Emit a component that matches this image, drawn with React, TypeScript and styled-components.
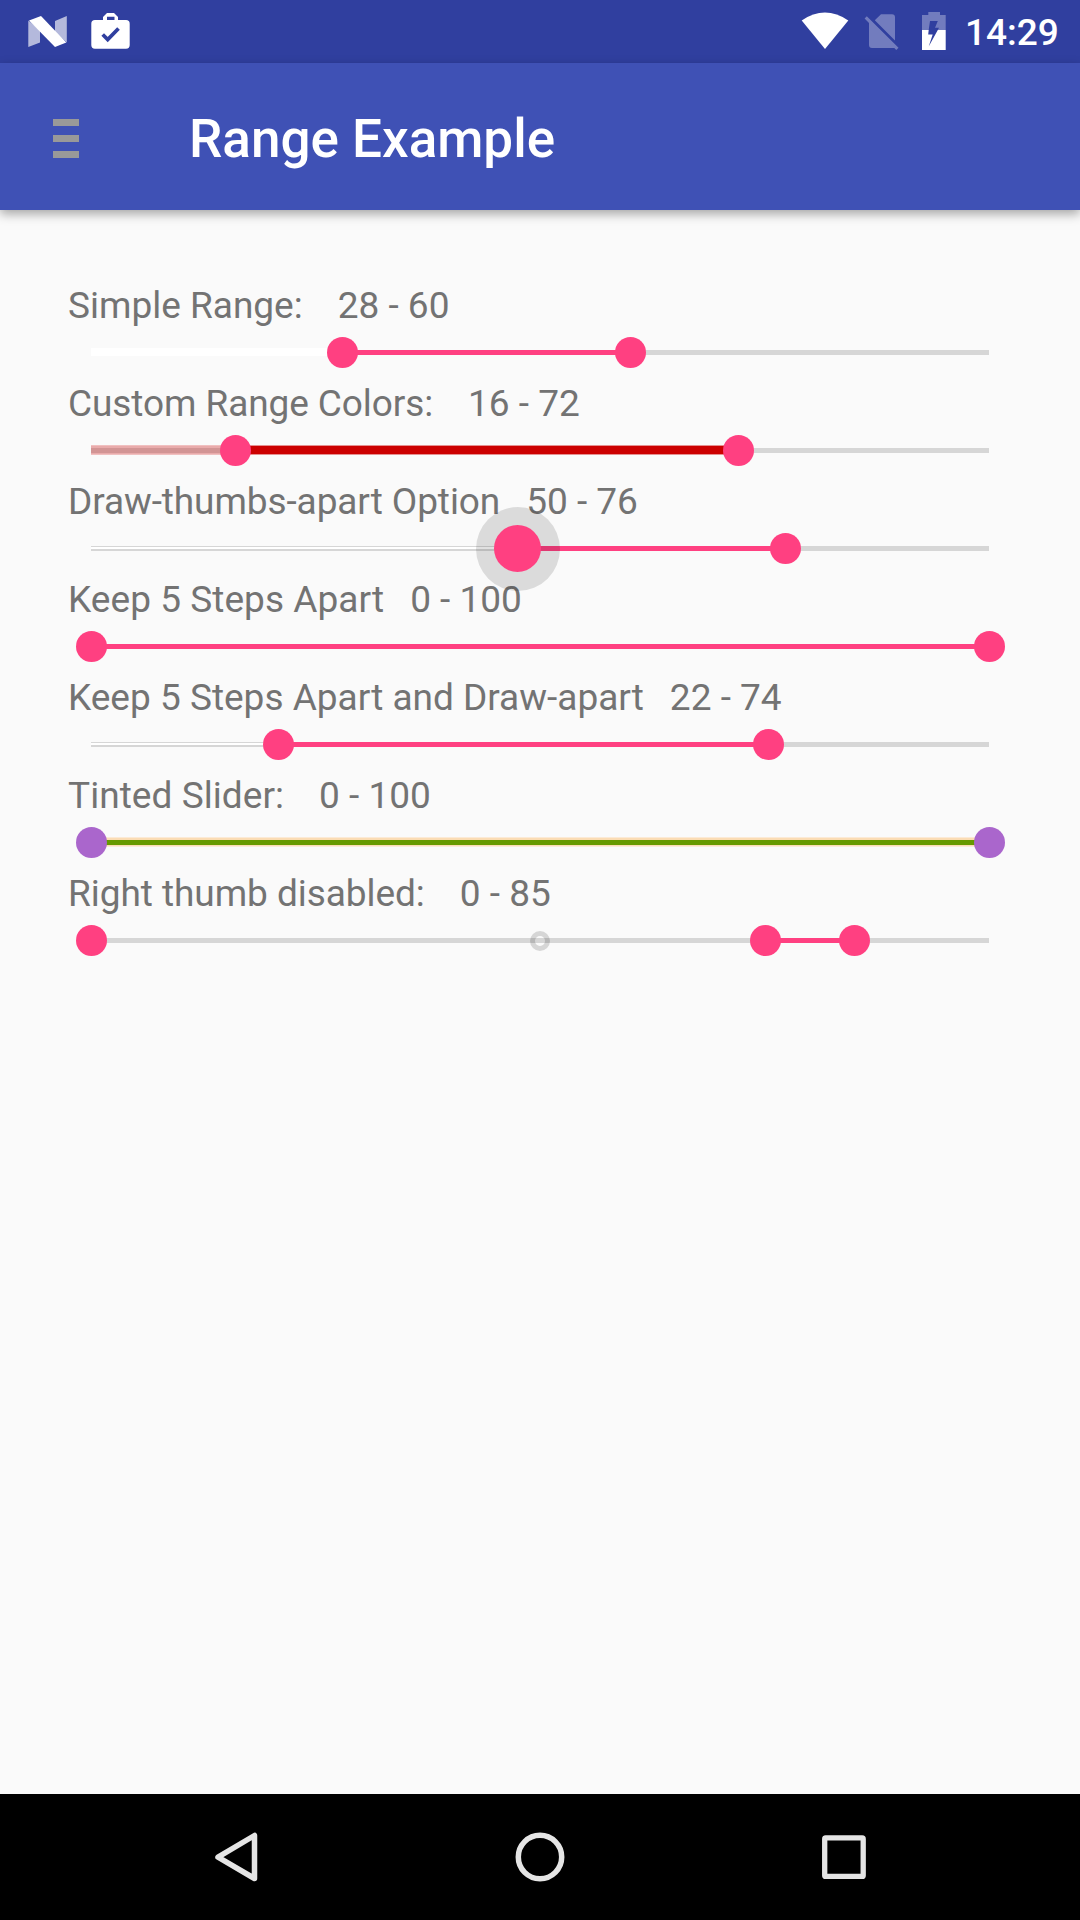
import React from "react";
import styled, { createGlobalStyle } from "styled-components";

const GlobalStyle = createGlobalStyle`
  html, body { margin: 0; padding: 0; background: #fafafa; }
  * { box-sizing: border-box; }
`;

const Screen = styled.div`
  width: 1080px;
  height: 1920px;
  display: flex;
  flex-direction: column;
  overflow: hidden;
  background: #fafafa;
  font-family: Roboto, sans-serif;
`;

const StatusBar = styled.header`
  height: 63px;
  flex: none;
  display: flex;
  align-items: center;
  justify-content: space-between;
  background: #303f9f;
  color: #fff;
`;

const StatusGroup = styled.div`
  display: flex;
  align-items: center;
  height: 63px;
`;

const StatusIcon = styled.svg<{ $gap?: number }>`
  display: block;
  flex: none;
  margin-left: ${(p) => p.$gap ?? 0}px;
`;

const Clock = styled.time`
  width: 92px;
  margin: 2px 23px 0 18px;
  font-size: 37px;
  line-height: 43px;
  font-weight: 500;
  white-space: nowrap;
`;

const AppBar = styled.div`
  height: 147px;
  flex: none;
  display: flex;
  align-items: center;
  padding-left: 53px;
  background: #3f51b5;
  box-shadow: 0 4px 10px rgba(0, 0, 0, 0.34);
`;

const MenuButton = styled.button`
  display: flex;
  flex-direction: column;
  gap: 9px;
  width: 27px;
  padding: 4px 0 0;
  border: 0;
  background: none;
`;

const MenuLine = styled.span`
  height: 7px;
  width: 26px;
  background: #999;
`;

const Title = styled.h1`
  margin: 4px 0 0 109px;
  color: #fff;
  font-size: 53px;
  line-height: 62px;
  font-weight: 500;
  white-space: nowrap;
`;

const Content = styled.main`
  flex: 1;
  display: flex;
  flex-direction: column;
  padding: 70px 91px 0 68px;
`;

const Row = styled.section`
  height: 98px;
  flex: none;
  display: flex;
  flex-direction: column;
`;

const Caption = styled.div`
  height: 49px;
  display: flex;
  align-items: center;
  padding-top: 2px;
  font-size: 37px;
  line-height: 47px;
  color: #737373;
  white-space: pre;
`;

const Label = styled.span<{ $tracking: number }>`
  letter-spacing: ${(p) => p.$tracking}px;
`;

const Value = styled.span<{ $gap: number }>`
  margin-left: ${(p) => p.$gap}px;
`;

const Slider = styled.div`
  position: relative;
  height: 47px;
  margin-left: 23px;
  width: 898px;
`;

const Bar = styled.div<{ $top: number; $h: number; $from: number; $to: number; $color: string }>`
  position: absolute;
  top: ${(p) => p.$top}px;
  height: ${(p) => p.$h}px;
  left: ${(p) => p.$from}px;
  width: ${(p) => p.$to - p.$from}px;
  background: ${(p) => p.$color};
`;

const Thumb = styled.span<{ $x: number; $size: number; $color: string }>`
  position: absolute;
  top: ${(p) => 23.5 - p.$size / 2}px;
  left: ${(p) => p.$x - p.$size / 2}px;
  width: ${(p) => p.$size}px;
  height: ${(p) => p.$size}px;
  border-radius: 50%;
  background: ${(p) => p.$color};
`;

const Ring = styled(Thumb)`
  background: none;
  border: 5px solid rgba(0, 0, 0, 0.14);
`;

const NavBar = styled.nav`
  height: 126px;
  flex: none;
  display: flex;
  justify-content: center;
  gap: 178px;
  background: #000;
`;

const NavButton = styled.button`
  width: 126px;
  height: 126px;
  padding: 0;
  border: 0;
  background: none;
`;

type Segment = { top: number; h: number; from: number; to: number; color: string };
type RangeRow = {
  label: string;
  value: string;
  gap: number;
  tracking?: number;
  bars: Segment[];
  thumbs: number[];
  thumbColor?: string;
  pressed?: boolean;
  marker?: number;
};

const PINK = "#ff4081";
const TRACK = "#d6d6d6";

const seg = (from: number, to: number, color: string, top = 21, h = 5): Segment => ({ top, h, from, to, color });

const rows: RangeRow[] = [
  {
    label: "Simple Range:",
    value: "28 - 60",
    gap: 35,
    bars: [seg(0, 251, "#fff", 19, 8), seg(251, 539, PINK), seg(539, 898, TRACK)],
    thumbs: [251.5, 539.5],
  },
  {
    label: "Custom Range Colors:",
    value: "16 - 72",
    gap: 35,
    tracking: -0.09,
    bars: [
      seg(0, 144, "#f0c0c0", 18, 10),
      seg(0, 144, "#e9abab", 19, 8),
      seg(0, 144, "#d29494"),
      seg(144, 647, "#e59090", 18, 10),
      seg(144, 647, "#cc0000", 19, 8),
      seg(647, 898, TRACK),
    ],
    thumbs: [144.5, 647.5],
  },
  {
    label: "Draw-thumbs-apart Option",
    value: "50 - 76",
    gap: 26,
    tracking: -0.09,
    bars: [seg(0, 426, TRACK), seg(0, 426, "#fff", 22, 2), seg(426, 694, PINK), seg(694, 898, TRACK)],
    thumbs: [426.5, 694.5],
    pressed: true,
  },
  { label: "Keep 5 Steps Apart", value: "0 - 100", gap: 26, tracking: 0.05, bars: [seg(0, 898, PINK)], thumbs: [0.5, 898.5] },
  {
    label: "Keep 5 Steps Apart and Draw-apart",
    value: "22 - 74",
    gap: 26,
    bars: [seg(0, 187, TRACK), seg(0, 187, "#fff", 22, 2), seg(187, 677, PINK), seg(677, 898, TRACK)],
    thumbs: [187.5, 677.5],
  },
  {
    label: "Tinted Slider:",
    value: "0 - 100",
    gap: 35,
    tracking: 0.06,
    bars: [seg(0, 898, "#fbead6", 18, 10), seg(0, 898, "#fbdcb4", 19, 8), seg(0, 898, "#669900")],
    thumbs: [0.5, 898.5],
    thumbColor: "#aa66cc",
  },
  {
    label: "Right thumb disabled:",
    value: "0 - 85",
    gap: 35,
    tracking: -0.05,
    bars: [seg(0, 674, TRACK), seg(674, 763, PINK), seg(763, 898, TRACK)],
    thumbs: [0.5, 674.5, 763.5],
    marker: 449.3,
  },
];

function RangeItem({ row }: { row: RangeRow }) {
  return (
    <Row>
      <Caption>
        <Label $tracking={row.tracking ?? 0}>{row.label}</Label>
        <Value $gap={row.gap}>{row.value}</Value>
      </Caption>
      <Slider>
        {row.bars.map((b, i) => (
          <Bar key={i} $top={b.top} $h={b.h} $from={b.from} $to={b.to} $color={b.color} />
        ))}
        {row.pressed && <Thumb $x={row.thumbs[0]} $size={84} $color="rgba(0,0,0,0.12)" />}
        {row.marker !== undefined && <Ring $x={row.marker} $size={20} $color="none" />}
        {row.thumbs.map((x, i) => (
          <Thumb key={x} $x={x} $size={row.pressed && i === 0 ? 47 : 31.5} $color={row.thumbColor ?? PINK} />
        ))}
      </Slider>
    </Row>
  );
}

export default function App() {
  return (
    <Screen>
      <GlobalStyle />
      <StatusBar>
        <StatusGroup>
          <StatusIcon $gap={28} width="39" height="63" viewBox="28 0 39 63" fill="#fff">
            <path fillOpacity=".64" d="M28.3 20.5 40 30V42.5L28.3 47ZM55 21l11.8-5v26.5L55 32Z" />
            <path d="M29 20.5 41 16 66.3 42.5 55 47Z" />
          </StatusIcon>
          <StatusIcon $gap={24} width="39" height="63" viewBox="91 0 39 63">
            <path
              fill="#fff"
              fillRule="evenodd"
              d="M95 20h8v-3l4-4h7l4 4v3h8q3.700 0 3.700 3.700V45q0 3.700-3.700 3.700H95q-3.700 0-3.700-3.700V23.700Q91.300 20 95 20ZM107 16.700V20h7.500v-3.300Z"
            />
            <path d="m102.700 34.500 5 5L118.500 28.500" fill="none" stroke="#303f9f" strokeWidth="3.700" />
          </StatusIcon>
        </StatusGroup>
        <StatusGroup>
          <StatusIcon width="48" height="63" viewBox="801 0 48 63" fill="#fff">
            <path d="M801.700 20.500Q824.900 4.700 848.300 20.500L825 49Z" />
          </StatusIcon>
          <StatusIcon $gap={14} width="37" height="63" viewBox="863 0 37 63">
            <path
              fill="#fff"
              fillOpacity=".32"
              d="M881 14.300H892q3 0 3 3V40.500L874.800 20.300ZM866.800 16.300 898.500 47.700 896.300 50 894.300 48.100H872q-3 0-3-3V22.900L864.600 18.500Z"
            />
          </StatusIcon>
          <StatusIcon $gap={21} width="26" height="63" viewBox="921 0 26 63">
            <path
              fill="#fff"
              fillOpacity=".32"
              d="M922 15h6.300v-3h11.700v3h5.700v15H937.800L939 27.700H935L937.800 21H930L928.700 30H922Z"
            />
            <path fill="#fff" d="M922 30H928.700L928.200 34.500H932.700L928.700 46.500 937.800 30H945.700V50H922Z" />
          </StatusIcon>
          <Clock>14:29</Clock>
        </StatusGroup>
      </StatusBar>
      <AppBar>
        <MenuButton aria-label="Menu">
          <MenuLine />
          <MenuLine />
          <MenuLine />
        </MenuButton>
        <Title>Range Example</Title>
      </AppBar>
      <Content>
        {rows.map((row) => (
          <RangeItem key={row.label} row={row} />
        ))}
      </Content>
      <NavBar>
        <NavButton aria-label="Back">
          <svg width="126" height="126" viewBox="173 1794 126 126">
            <path
              d="M254.500 1835.500V1878.500L218 1857.200Z"
              fill="none"
              stroke="#e5e5e5"
              strokeWidth="5.500"
              strokeLinejoin="round"
            />
          </svg>
        </NavButton>
        <NavButton aria-label="Home">
          <svg width="126" height="126" viewBox="477 1794 126 126">
            <circle cx="540" cy="1857" r="21.700" fill="none" stroke="#e5e5e5" strokeWidth="5.500" />
          </svg>
        </NavButton>
        <NavButton aria-label="Overview">
          <svg width="126" height="126" viewBox="781 1794 126 126">
            <rect x="824.700" y="1837.900" width="38.500" height="38.500" rx="1" fill="none" stroke="#e5e5e5" strokeWidth="5.300" strokeLinejoin="round" />
          </svg>
        </NavButton>
      </NavBar>
    </Screen>
  );
}
